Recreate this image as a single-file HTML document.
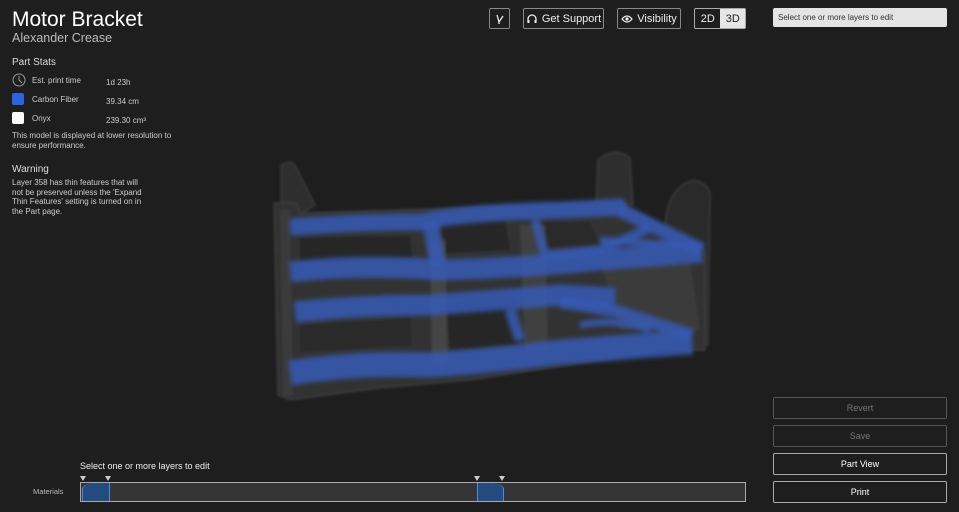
<!DOCTYPE html>
<html><head><style>
body{margin:0;width:959px;height:512px;background:#1e1e1e;font-family:"Liberation Sans",sans-serif;color:#ddd;position:relative;overflow:hidden}
.a{position:absolute}
.btn{position:absolute;border:1px solid #888;border-radius:2px;color:#eee;font-size:11px;display:flex;align-items:center;justify-content:center;box-sizing:border-box}
.rb{position:absolute;left:773px;width:174px;height:22px;border:1px solid #aaa;border-radius:2px;box-sizing:border-box;font-size:9px;color:#fff;display:flex;align-items:center;justify-content:center}
.s{font-size:8px;color:#ccc}
</style></head><body>
<div class="a" style="left:12px;top:8px;font-size:21px;color:#fff">Motor Bracket</div>
<div class="a" style="left:12px;top:31px;font-size:12.5px;color:#bbb">Alexander Crease</div>
<div class="a" style="left:12px;top:57px;font-size:10px;color:#ddd">Part Stats</div>
<svg class="a" style="left:12px;top:73px" width="14" height="14"><circle cx="7" cy="7" r="6" fill="none" stroke="#999" stroke-width="1"/><path d="M7 3V7L10 10" stroke="#999" fill="none"/></svg>
<div class="a s" style="left:32px;top:76px">Est. print time</div><div class="a s" style="left:106px;top:78px">1d 23h</div>
<div class="a" style="left:12px;top:93px;width:12px;height:12px;background:#2d63e0;border-radius:2px"></div>
<div class="a s" style="left:32px;top:95px">Carbon Fiber</div><div class="a s" style="left:106px;top:97px">39.34 cm</div>
<div class="a" style="left:12px;top:112px;width:12px;height:12px;background:#fff;border-radius:2px"></div>
<div class="a s" style="left:32px;top:114px">Onyx</div><div class="a s" style="left:106px;top:116px">239.30 cm³</div>
<div class="a s" style="left:12px;top:131px;line-height:9.5px">This model is displayed at lower resolution to<br>ensure performance.</div>
<div class="a" style="left:12px;top:164px;font-size:10px;color:#ddd">Warning</div>
<div class="a s" style="left:12px;top:178px;line-height:9.5px">Layer 358 has thin features that will<br>not be preserved unless the 'Expand<br>Thin Features' setting is turned on in<br>the Part page.</div>

<div class="btn" style="left:489px;top:8px;width:21px;height:21px"><svg width="12" height="12"><path d="M3 2 L5 9 L9 3 M5 9 V11" stroke="#eee" stroke-width="1.3" fill="none"/></svg></div>
<div class="btn" style="left:523px;top:8px;width:81px;height:21px"><svg width="12" height="12" style="margin-right:4px"><path d="M2 9 V6 A4 4 0 0 1 10 6 V9" stroke="#eee" stroke-width="1.3" fill="none"/><rect x="1.5" y="7" width="2" height="3" fill="#eee"/><rect x="8.5" y="7" width="2" height="3" fill="#eee"/></svg>Get Support</div>
<div class="btn" style="left:617px;top:8px;width:64px;height:21px"><svg width="12" height="10" style="margin-right:4px"><path d="M1 5 Q6 -1 11 5 Q6 11 1 5Z" stroke="#eee" stroke-width="1.2" fill="none"/><circle cx="6" cy="5" r="1.6" fill="#eee"/></svg>Visibility</div>
<div class="btn" style="left:694px;top:8px;width:52px;height:21px;border-color:#aaa;justify-content:flex-start"><span style="width:26px;text-align:center">2D</span><span style="width:25px;height:19px;background:#e6e6e6;color:#222;display:flex;align-items:center;justify-content:center">3D</span></div>
<div class="a" style="left:773px;top:8px;width:174px;height:19px;background:#e4e4e4;border-radius:2px;color:#333;font-size:8px;line-height:19px;padding-left:5px;box-sizing:border-box">Select one or more layers to edit</div>

<svg class="a" style="left:0;top:0" width="959" height="512">
<defs><filter id="b"><feGaussianBlur stdDeviation="1.2"/></filter><filter id="b2"><feGaussianBlur stdDeviation="2.5"/></filter></defs>
<g filter="url(#b)">
<path d="M281 165 Q290 160 295 165 L315 205 L300 215 L281 215Z" fill="#2e2e2e" stroke="#444"/>
<path d="M596 205 L598 160 Q615 145 630 158 L633 205Z" fill="#2e2e2e" stroke="#444"/>
<path d="M665 225 Q668 185 695 180 Q712 185 710 200 L708 345 L690 350Z" fill="#2c2c2c" stroke="#444"/>
<path d="M274 203 L296 203 L300 213 L620 203 L705 250 L705 350 L660 350 L600 360 L470 380 L380 388 L290 400 L278 395Z" fill="#333" stroke="#444"/>
<path d="M280 210 L290 210 L293 395 L283 398Z" fill="#3a3a3a"/>
<path d="M440 222 L505 220 L510 250 L445 253Z" fill="#262626"/>
<path d="M300 238 L410 236 L412 258 L300 262Z" fill="#282828"/>
<path d="M540 222 L590 222 L600 245 L545 248Z" fill="#2a2a2a"/>
<path d="M445 305 L515 300 L518 345 L450 350Z" fill="#252525"/>
<path d="M300 325 L410 318 L412 345 L300 352Z" fill="#2a2a2a"/>
<path d="M430 240 L445 240 L448 365 L432 368Z" fill="#444"/>
<path d="M520 225 L545 225 L548 350 L525 352Z" fill="#404040"/>
<path d="M600 262 L690 262 L700 330 L620 330Z" fill="#3a3a3a"/>
</g>
<g filter="url(#b2)" fill="none" stroke="#3659b5" stroke-opacity="0.85" stroke-linecap="butt">
<path d="M290 227 Q360 222 420 222 Q470 212 560 210 L625 207" stroke-width="17"/>
<path d="M620 210 L702 250" stroke-width="14"/>
<path d="M430 222 L438 265" stroke-width="16"/>
<path d="M535 220 L545 255 L600 250 L650 228" stroke-width="9"/>
<path d="M600 240 L680 245" stroke-width="7"/>
<path d="M290 272 Q360 264 440 270 Q520 268 600 260 L702 252" stroke-width="21"/>
<path d="M295 312 Q360 305 430 305 Q500 300 560 295 L615 298" stroke-width="21"/>
<path d="M560 302 L620 312 L692 335" stroke-width="12"/>
<path d="M510 310 L520 340" stroke-width="11"/>
<path d="M580 325 Q620 318 650 330" stroke-width="7"/>
<path d="M290 373 Q360 362 430 365 Q500 360 560 352 L692 342" stroke-width="25"/>
</g>
</svg>

<div class="rb" style="top:397px;border-color:#555;color:#777">Revert</div>
<div class="rb" style="top:425px;border-color:#555;color:#777">Save</div>
<div class="rb" style="top:453px">Part View</div>
<div class="rb" style="top:481px">Print</div>

<div class="a" style="left:80px;top:461px;font-size:9px;color:#eee">Select one or more layers to edit</div>
<div class="a" style="left:33px;top:487px;font-size:7.5px;color:#bbb">Materials</div>
<div class="a" style="left:80px;top:482px;width:666px;height:20px;background:#353535;border:1px solid #aaa;box-sizing:border-box"></div>
<div class="a" style="left:82px;top:483px;width:26px;height:18px;background:#244a80;border-left:1px solid #4a8ae0;border-right:1px solid #4a8ae0;border-top-left-radius:14px 6px"></div>
<div class="a" style="left:477px;top:483px;width:25px;height:18px;background:#244a80;border-left:1px solid #4a8ae0;border-right:1px solid #4a8ae0;border-top-right-radius:14px 6px"></div>
<svg class="a" style="left:0;top:476px" width="959" height="6" fill="#ccc"><path d="M80 0h6l-3 5z M105 0h6l-3 5z M474 0h6l-3 5z M499 0h6l-3 5z"/></svg>
</body></html>
